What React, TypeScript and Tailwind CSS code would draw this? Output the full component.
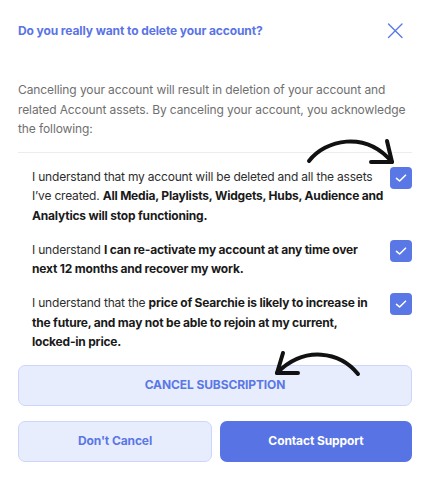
import React from 'react';

function CheckBox() {
  return (
    <div className="w-[22px] h-[22px] shrink-0 rounded-[4px] bg-[#5a77e6] flex items-center justify-center">
      <svg width="12" height="10" viewBox="0 0 12 10" fill="none">
        <path d="M1.5 5.4 L4.6 8 L10.5 2.2" stroke="white" strokeWidth="1.6" strokeLinecap="round" strokeLinejoin="round" />
      </svg>
    </div>
  );
}

function Item({ children }: { children: React.ReactNode }) {
  return (
    <div className="flex items-start justify-between gap-[4px]">
      <p className="min-w-0 whitespace-nowrap text-[12px] leading-[19.5px] tracking-[-0.2px] text-[#2e2e2e]">{children}</p>
      <CheckBox />
    </div>
  );
}

export default function App() {
  return (
    <div
      className="relative w-[430px] h-[480px] bg-white overflow-hidden px-[18px] tracking-[-0.1px]"
      style={{ fontFamily: 'Inter, "Noto Sans", sans-serif' }}
    >
      <div className="mt-[23px] h-[16px] flex items-center justify-between">
        <h2 className="text-[12px] font-bold text-[#5a74e6]">
          Do you really want to delete your account?
        </h2>
        <svg width="16" height="16" viewBox="0 0 16 16" className="mr-[9px]" fill="none">
          <path d="M1.5 1 L15 14.5 M15 1 L1.5 14.5" stroke="#5a78e8" strokeWidth="1.4" strokeLinecap="round" />
        </svg>
      </div>

      <p className="mt-[41px] text-[12px] leading-[19.5px] text-[#6f6f6f]">
        Cancelling your account will result in deletion of your account and
        <br />
        related Account assets. By canceling your account, you acknowledge
        <br />
        the following:
      </p>

      <div className="mt-[13px] border-t border-[#ececec]" />

      <div className="flex flex-col gap-[14.5px] pt-[14px] pl-[14px]">
        <Item>
          I understand that my account will be deleted and all the assets
          <br />
          I’ve created. <b className="text-[#1a1a1a]">All Media, Playlists, Widgets, Hubs, Audience and</b>
          <br />
          <b className="text-[#1a1a1a]">Analytics will stop functioning.</b>
        </Item>
        <Item>
          I understand <b className="text-[#1a1a1a]">I can re-activate my account at any time over</b>
          <br />
          <b className="text-[#1a1a1a]">next 12 months and recover my work.</b>
        </Item>
        <Item>
          I understand that the <b className="text-[#1a1a1a]">price of Searchie is likely to increase in</b>
          <br />
          <b className="text-[#1a1a1a]">the future, and may not be able to rejoin at my current,</b>
          <br />
          <b className="text-[#1a1a1a]">locked-in price.</b>
        </Item>
      </div>

      <button className="mt-[13px] w-full h-[41px] rounded-[7px] bg-[#e8edfd] border border-[#ccd6fa] text-[12px] font-bold text-[#5a77e6]">
        CANCEL SUBSCRIPTION
      </button>

      <div className="mt-[15px] flex gap-[8px]">
        <button className="flex-1 h-[41px] rounded-[7px] bg-[#e8edfd] border border-[#ccd6fa] text-[12px] font-bold text-[#5a77e6]">
          Don't Cancel
        </button>
        <button className="flex-1 h-[41px] rounded-[7px] bg-[#5873e3] text-[12px] font-bold text-white">
          Contact Support
        </button>
      </div>

      {/* hand-drawn arrows over the content */}
      <svg className="absolute inset-0 pointer-events-none" width="430" height="480" fill="none">
        <g stroke="#111" strokeWidth="4" strokeLinecap="round" strokeLinejoin="round">
          <path d="M309 161 C 325 140, 365 130, 392 162" />
          <path d="M387 141 L392 162 L371 162" />
          <path d="M358 374 C 340 352, 305 345, 277 373" />
          <path d="M283 353 L277 373 L298 373" />
        </g>
      </svg>
    </div>
  );
}
